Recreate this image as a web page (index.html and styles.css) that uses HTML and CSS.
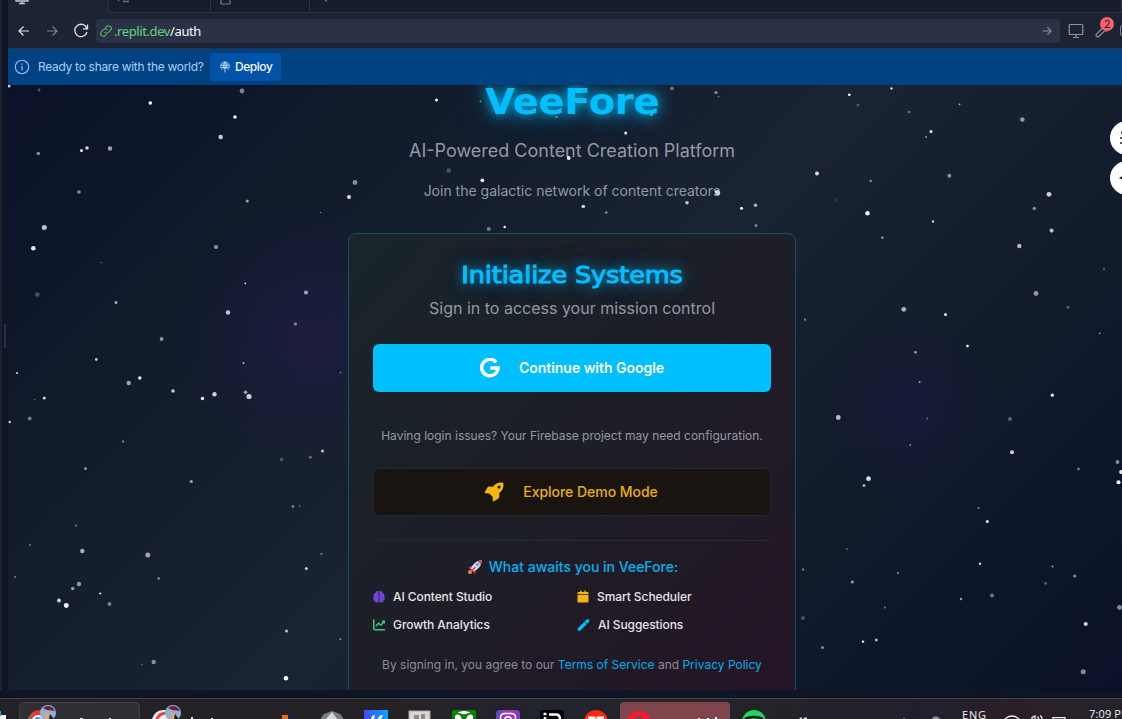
FILE: index.html
```
<!DOCTYPE html>
<html lang="en"><head><meta charset="utf-8"><title>VeeFore</title><link rel="stylesheet" href="styles.css"></head>
<body>
<div class="workspace">
  <div class="side"></div>
  <div class="gutter"><div class="handle"></div></div>
  <main class="pane">
    <div class="tabs">
      <div class="tab active"><svg width="14" height="6"><path d="M1 0v1h12V0M7 1v3M4 3.500h6" fill="none" stroke="#c5cad6" stroke-width="1.3"/></svg></div>
      <div class="tab t2"><svg width="14" height="4"><path d="M1 1l1-1M6 1.5h6" stroke="#77705f" stroke-width="1.3"/></svg></div>
      <div class="tab t3"><svg width="12" height="6"><path d="M1 0v3q0 1 1 1h7q1 0 1-1V0" fill="none" stroke="#777d8c" stroke-width="1.2"/></svg></div>
      <div class="tab t4"><svg width="12" height="4"><path d="M5 0v1.500" stroke="#8b91a0" stroke-width="1.3"/></svg></div>
    </div>
    <div class="toolbar">
      <svg class="nav" width="12" height="12" viewBox="0 0 12 12"><path d="M11 6H1.500M5.500 1.500L1 6l4.500 4.500" fill="none" stroke="#dfe3eb" stroke-width="1.2"/></svg>
      <svg class="nav dim" width="12" height="12" viewBox="0 0 12 12"><path d="M1 6h9.500M6.500 1.500L11 6l-4.500 4.500" fill="none" stroke="#7d8391" stroke-width="1.2"/></svg>
      <svg class="nav" width="16" height="16" viewBox="0 0 16 16"><path d="M13.800 5.300A6.200 6.200 0 1 0 14 9M14.500 1.500V5.800h-4.500" fill="none" stroke="#dfe3eb" stroke-width="1.3"/></svg>
      <div class="address">
        <svg width="12" height="12" viewBox="0 0 24 24"><path d="M9 14a5 5 0 0 0 8 .5l4-4a5 5 0 0 0-7.500-7.500L11 5.500M15 10a5 5 0 0 0-8-.5l-4 4a5 5 0 0 0 7.500 7.500L13 18.500" fill="none" stroke="#57ab6c" stroke-width="2.200"/></svg>
        <span class="url"><span class="host">.replit.dev</span>/auth</span>
        <svg class="go" width="10" height="10" viewBox="0 0 12 12"><path d="M1 6h9.500M6.500 1.500L11 6l-4.500 4.500" fill="none" stroke="#8a8f9d" stroke-width="1.3"/></svg>
      </div>
      <svg class="monitor" width="16" height="16" viewBox="0 0 16 16"><rect x="1.200" y="1.500" width="13.600" height="10" rx="1" fill="none" stroke="#9095a1" stroke-width="1.2"/><path d="M8 12v2.500M5 14.500h6" stroke="#9095a1" stroke-width="1.2"/></svg>
      <div class="tools"><svg width="16" height="16" viewBox="0 0 16 16"><path d="M8 5.500L2.500 11.200a1.600 1.600 0 0 0 2.300 2.300L10.300 8H13V6" fill="none" stroke="#9095a1" stroke-width="1.2"/></svg><span class="badge">2</span></div>
      <div class="edge"></div>
    </div>
    <div class="banner">
      <svg width="16" height="16" viewBox="0 0 16 16"><circle cx="8" cy="8" r="6.700" fill="none" stroke="#8cc4ff" stroke-width="1.1"/><path d="M8 7v4.200M8 4.600v1.200" stroke="#8cc4ff" stroke-width="1.2"/></svg>
      <span class="ready">Ready to share with the world?</span>
      <div class="deploy"><svg width="12" height="12" viewBox="0 0 12 12"><g fill="none" stroke="#dcebfb" stroke-width=".8"><path d="M3.200 8.500A4.300 4.300 0 1 1 8.800 8.500M4.300 6.500V3.500q1.700-4 3.400 0v3M2 4.200h8M2.800 6.500h6.400M6 1v10.500M4.500 8L6 6.500 7.500 8"/></g></svg><span>Deploy</span></div>
    </div>
    <section class="view">
      <svg class="stars" id="stars" width="1114" height="605" viewBox="8 85 1114 605"></svg>
      <h1 class="glow">VeeFore</h1>
      <p class="tagline">AI-Powered Content Creation Platform</p>
      <p class="join">Join the galactic network of content creators</p>
      <div class="card">
        <h2 class="glow">Initialize Systems</h2>
        <p class="signin">Sign in to access your mission control</p>
        <div class="btn google"><svg width="20" height="20" viewBox="0 0 20 20"><path d="M16.200 4.300A8.200 8.200 0 1 0 18.100 10H10.300" fill="none" stroke="#fff" stroke-width="3.500"/></svg><span>Continue with Google</span></div>
        <p class="issues">Having login issues? Your Firebase project may need configuration.</p>
        <div class="btn demo"><svg width="20" height="20" viewBox="0 0 20 20"><path fill="#f5b70c" fill-rule="evenodd" d="M19.300.8C15 .2 11.800 1 9 4.700L5.200 4.600Q4 4.700 3.300 5.800L.6 10.400Q.4 11.300 1.600 11.200L5.300 11.500 8.500 14.700 8.800 18.500Q9 19.800 10 19.300L14 16.800Q15.200 16 15.300 14.900V11.100C19 8.200 19.900 5 19.300.8zM15 3.400a1.500 1.500 0 1 1 0 3.100 1.500 1.500 0 0 1 0-3.100z"/></svg><span>Explore Demo Mode</span></div>
        <div class="rule"></div>
        <h3><svg width="16" height="16" viewBox="0 0 16 16"><path d="M4.500 6.500L1 9l3 1zM9.500 11.500l-2 3.500-1.500-3z" fill="#dd2e57"/><path d="M14.700 1.200C9.500 1.200 5.500 5.400 3.600 9.800l2.600 2.600C11 10.400 14.800 6.800 14.700 1.200z" fill="#dfe1ec"/><path d="M14.700 1.200q-2.500 0-4.200 1l3.200 3.200q1-2 1-4.200z" fill="#e33c5f"/><path d="M8.500 8L5 11.500" stroke="#dd2e57" stroke-width="1.500"/><circle cx="10.400" cy="5.600" r="1.700" fill="#539fdc"/><circle cx="3" cy="13" r="2" fill="#f28a36"/></svg><span>What awaits you in VeeFore:</span></h3>
        <div class="features">
          <div><svg width="12" height="14" viewBox="0 0 12 14"><path d="M5.600 1.300C4 .6 2.500 1.600 2.300 3 .9 3.600.3 5.200.7 6.400c-.9 1-.6 3 .5 3.800.2 1.800 2.600 3 4.400 1.900zM6.400 1.300C8 .6 9.500 1.600 9.700 3c1.400.6 2 2.200 1.600 3.400.9 1 .6 3-.5 3.800-.2 1.800-2.600 3-4.400 1.900z" fill="#7543dc"/></svg><span>AI Content Studio</span></div>
          <div><svg width="12" height="14" viewBox="0 0 12 14"><path fill="#f5b70c" d="M.5 4.200V3q0-1 1-1H3V.7h1.600V2h2.800V.7H9V2h1.500q1 0 1 1v1.200zM.5 5h11v6.500q0 1-1 1h-9q-1 0-1-1z"/></svg><span>Smart Scheduler</span></div>
          <div><svg width="12" height="14" viewBox="0 0 12 14"><path d="M.8 1.500v9.300q0 .9 1 .9H12M3 8l2.500-2.800L8 7l3.200-3.500M9 3.200h2.500v2.300" fill="none" stroke="#38ce72" stroke-width="1.500"/></svg><span>Growth Analytics</span></div>
          <div><svg width="13" height="14" viewBox="0 0 13 14"><path d="M2.200 11.200L10.800 2.800" stroke="#00bfff" stroke-width="3.300" stroke-linecap="round"/><path d="M7.700 3.800l2 2" stroke="#1d1e29" stroke-width=".7"/></svg><span>AI Suggestions</span></div>
        </div>
        <p class="terms">By signing in, you agree to our <a>Terms of Service</a> and <a>Privacy Policy</a></p>
      </div>
      <div class="float f1"><svg width="12" height="16"><path d="M2 2q1-2 6-2v4H2zM1 7h9v2H1zM1 12h9v2H1z" fill="#555"/></svg></div>
      <div class="float f2"><svg width="12" height="16"><path d="M0 8l5-3v5z" fill="#111"/></svg></div>
    </section>
  </main>
</div>
<footer class="taskbar">
<svg width="1122" height="20" viewBox="0 699 1122 20">
  <defs><linearGradient id="ig"><stop stop-color="#4e50c9"/><stop offset=".5" stop-color="#b532a5"/><stop offset="1" stop-color="#7d39cf"/></linearGradient><linearGradient id="bl"><stop stop-color="#3f4bff"/><stop offset="1" stop-color="#0aa5ff"/></linearGradient></defs>
  <path d="M0 711h1v4h5v4H0z" fill="#fff"/><path d="M0 711h1v5H0z" fill="#12a7e8"/>
  <rect x="19.500" y="702.500" width="120" height="30" rx="4" fill="#302f34" stroke="#403f44"/>
  <path d="M28 719q3-10 14-9l3 9z" fill="#e33b2e"/><path d="M28 719l1-3 2 3z" fill="#25a653"/><circle cx="38" cy="721" r="5" fill="#4b89ee" stroke="#fff" stroke-width="2"/>
  <circle cx="48" cy="713" r="8" fill="#86b3d8"/><path d="M43 708q5-4 10 0l2 3-8-1z" fill="#761d3c"/><path d="M44 719l2-7 5 2 1 5z" fill="#dda57b"/><path d="M50 714l4 5h-5z" fill="#1c1d2b"/>
  <path d="M152 719q3-10 14-9l3 9z" fill="#eee"/><path d="M157 719q2-6 10-6" fill="none" stroke="#e84235" stroke-width="3"/>
  <circle cx="173" cy="713" r="8" fill="#86b3d8"/><path d="M168 708q5-4 10 0l2 3-8-1z" fill="#761d3c"/><path d="M169 719l2-7 5 2 1 5z" fill="#dda57b"/><path d="M175 714l4 5h-5z" fill="#1c1d2b"/>
  <path d="M80 718h3v1h-3zM109 718h2v1h-2zM191 717h2v2h-2zM211 718h2v1h-2z" fill="#e5e5e5"/>
  <rect x="282" y="715" width="6" height="4" fill="#ef6910"/><rect x="288" y="715" width="8" height="4" fill="#19233b"/>
  <path d="M321 718l3-4 8-3 8 3 3 4v1h-22z" fill="#7a8087"/><path d="M326 719l6-7 5 7z" fill="#d4d7da"/>
  <rect x="364" y="710" width="24" height="12" fill="url(#bl)"/><path d="M371 719q1-4 4-4l-1 4zM378 719q1-4 5-4l-2 4z" fill="#fff"/>
  <rect x="409" y="711" width="21" height="10" fill="#d9d7cf" stroke="#aaa79f"/><path d="M414 715h5v4h-5zM421 714h4v5h-4z" fill="#8d8c88"/>
  <rect x="452" y="710" width="24" height="12" rx="2" fill="#127d13"/><path d="M457.500 712.500q6.500-3 13 0l-6.500 2zM455 716q4-4 7 3h-7zM473 716q-4-4-7 3h7z" fill="#fff"/>
  <rect x="496" y="710" width="24" height="16" rx="4" fill="url(#ig)"/><rect x="500.500" y="713.500" width="15" height="12" rx="4" fill="none" stroke="#fff" stroke-width="1.600"/><circle cx="508" cy="720" r="3.300" fill="none" stroke="#fff" stroke-width="1.600"/>
  <rect x="540" y="710" width="24" height="14" rx="3" fill="#000"/><path d="M543.500 714h3M545 717v2M549 714.500h7q4 0 4 5" fill="none" stroke="#fff" stroke-width="2.500"/>
  <circle cx="596" cy="722" r="12" fill="#ff2a14"/><rect x="588" y="716.500" width="7.500" height="5" rx="1" fill="#fff"/><rect x="596.500" y="716.500" width="7.500" height="5" rx="1" fill="#fff"/>
  <rect x="620" y="702" width="110" height="24" rx="4" fill="#80454c"/><path d="M628 719q2-8 11-8t11 8h-7q-1-4-4-4t-4 4z" fill="#f51b2d"/><path d="M698 718h2v1h-2zM707 718h2v1h-2zM715 717h2v2h-2z" fill="#fff"/>
  <circle cx="754" cy="722" r="12" fill="#1ed760"/><path d="M745 719q9-4 18 0" stroke="#111" stroke-width="2.500" fill="none"/>
  <path d="M800 719q0-1 2-1M804 719q0-1 3-1" stroke="#ddd" stroke-width="1.500"/><circle cx="936" cy="721" r="4.500" fill="#929196"/><path d="M903 718h2v1h-2z" fill="#777"/>
  <g fill="none" stroke="#eee" stroke-width="1.300"><path d="M1005 719q7-6 14 0M1032 719v-1.500l3-1.500v3M1037.500 716.500q1 1 1 2.500M1040 715.500q2 1 2 3.500M1053 719v-1.300h12v1.300"/></g>
  <text x="962" y="718.500" textLength="24" class="tray">ENG</text><text x="1089" y="718" class="tray" textLength="42">7:09 PM</text>
</svg>
</footer>
<script src="stars.js"></script>
</body></html>
```

FILE: styles.css
```
*{box-sizing:border-box}
body{margin:0;width:1122px;height:719px;overflow:hidden;background:#0e1525;font-family:Inter,sans-serif;display:flex;flex-direction:column}
h1,h2,h3,p{margin:0;font-weight:400;white-space:nowrap}
svg{display:block;flex:none}
.workspace{display:flex;height:698px;padding-bottom:8px}
.side{width:2px;background:#1c2231;flex:none}
.gutter{width:6px;flex:none;padding:324px 0 0 2px}
.handle{width:2px;height:24px;background:#2b3245}
.pane{width:1114px;flex:none;display:flex;flex-direction:column}
.tabs{height:13px;display:flex;background:#171d2d;flex:none}
.tab{width:100px;border-right:1px solid #2b3245;border-bottom:1px solid #2b3245;padding-left:7px}
.tab.active{background:#1c2333;border-bottom-color:#1c2333;width:101px}
.tab.t2{width:102px;padding-left:8px}.tab.t3{width:99px;padding-left:9px}.tab.t4{flex:1;padding-left:11px}
.toolbar{height:36px;background:#1c2333;border-bottom:1px solid #2b3245;display:flex;align-items:center;padding-left:10px;flex:none}
.nav{margin-right:16px;flex:none}.nav.dim{margin-right:15px}
.toolbar .nav:nth-child(3){margin-right:7px}
.address{width:964px;flex:none;height:24px;border-radius:4px;background:#2b3245;display:flex;align-items:center;padding:0 8px 0 4px;color:#f5f9fc}
.url{font:13px "Noto Sans",sans-serif;margin-left:2px;letter-spacing:-.4px;flex:1}
.host{color:#62d47e}
.monitor{margin-left:8px}
.tools{position:relative;margin-left:10px;flex:none}
.badge{position:absolute;left:6px;top:-6px;width:14px;height:14px;border-radius:50%;background:#ff5f66;color:#1c2333;font-size:11px;line-height:14px;text-align:center}
.edge{width:4px;flex:none;height:11px;border:1px solid #7c8290;border-radius:2px;margin-left:10px}
.banner{height:36px;background:#004182;display:flex;align-items:center;padding-left:6px;flex:none}
.ready{font:12px/18px Inter,sans-serif;color:#a3d0ff;margin-left:8px;width:172px;white-space:nowrap;letter-spacing:-.3px}
.deploy{width:71px;height:28px;border-radius:4px;background:#0053a6;color:#f5f9fc;display:flex;align-items:center;padding-left:9px;gap:4px;font:500 12px/18px Inter,sans-serif;letter-spacing:-.45px}
.view{height:605px;position:relative;overflow:hidden;display:flex;flex-direction:column;align-items:center;border-bottom-left-radius:4px;background:radial-gradient(circle at 299px 250px,rgba(45,25,85,.4),rgba(37,29,84,.32) 40px,rgba(35,24,75,.18) 85px,transparent 125px),radial-gradient(circle at 902px 324px,rgba(35,24,90,.34),rgba(35,22,70,.16) 50px,transparent 85px),linear-gradient(135deg,#0a1128 0%,#101a2b 20%,#1a2332 50%,#101a2b 76%,#0a1128 100%)}
.stars{position:absolute;left:0;top:0}
.view>h1,.view>p,.card{margin-left:14px}
.glow{color:#00bfff;font-family:"DejaVu Sans",sans-serif;text-shadow:0 0 10px #00a9e4,0 0 20px rgba(0,191,255,.55),0 0 40px rgba(0,191,255,.3)}
h1.glow{font-size:36px;font-weight:700;line-height:42px;height:40px;margin-top:-4px;letter-spacing:-.3px;transform:scaleX(1.07)}
.tagline{font-size:18px;line-height:28px;color:#9498a3;margin-top:16px;height:28px}
.join{font-size:14px;line-height:20px;color:#9498a3;margin-top:16px;height:20px}
.card{width:448px;height:480px;flex:none;margin-top:32px;border:1px solid #125362;border-radius:8px;padding:24px;background:linear-gradient(135deg,#18252a,#1e1e27 50%,#251426);position:relative;display:flex;flex-direction:column}
.card>*{flex:none}
h2.glow{font-size:23px;line-height:34px;height:32px;text-align:center;-webkit-text-stroke:1px #00bfff;letter-spacing:-.1px;transform:scaleX(1.11)}
.signin{font-size:16px;line-height:24px;margin-top:6px;text-align:center;color:#9498a3}
.btn{border-radius:6px;height:48px;display:flex;align-items:center;justify-content:center;font-weight:500;font-size:14px;letter-spacing:-.03px}
.btn span{margin-bottom:2px}
.google{background:#00bfff;color:#fff;font-weight:600;margin-top:24px;gap:19px}
.issues{font-size:12px;line-height:16px;text-align:center;color:#9498a3;margin-top:36px}
.demo{background:#1a1411;border:1px solid #1d2933;color:#eab008;margin-top:24px;gap:19px;padding-right:2px}
.rule{height:1px;background:#1f2b33;margin-top:24px}
h3{font-size:14px;line-height:20px;font-weight:500;color:#00b4f0;display:flex;gap:6px;align-items:center;justify-content:center;margin-top:16px;padding-left:1px}
.features{display:grid;grid-template-columns:204px 1fr;grid-template-rows:16px 16px;row-gap:12px;margin-top:12px;color:#e5e5e8;font-size:12px;font-weight:500;line-height:16px;letter-spacing:-.08px}
.features div{display:flex;align-items:center;gap:8px}
.terms{font-size:12px;line-height:16px;margin-top:24px;text-align:center;color:#8a8c99}
.terms a{color:#00aee8}
.float{position:absolute;width:34px;height:34px;border-radius:50%;background:#fff;left:1102px;display:flex;align-items:center;padding-left:9px}
.f1{top:36px}.f2{top:76px}
.taskbar{height:21px;border-top:1px solid #424146;background:linear-gradient(90deg,#222128,#252225 35%,#20242c 52%,#252328 66%,#20202d 82%,#2a1f27 91%,#25232a)}
.tray{font:11px "Open Sans",sans-serif;fill:#f0f0f0}
```

FILE: stars.js
```
// x, y, radius, opacity
const stars = [
[9,86,1.5,.8],[39,90,1.5,.3],[242,91,2.4,.45],[150.300,103,1.8,1],[235,117,1.8,.95],[220.700,137,2.2,.8],[38.300,153.500,1.8,.5],[81.500,150.500,1.5,.9],[87,148,1.8,.8],[110,148.500,2.2,.6],[79,192,1.8,.5],[247.300,201,1.5,.6],[320.500,212.500,.8,.5],[44.300,227.500,2.5,.75],[33.300,248.300,2.3,.9],[101.300,262.500,.9,.3],[216,247,2,.55],[245.300,283.300,.9,.9],[306,292.500,2.1,.6],[37.300,294.500,2.3,.25],[116,302.500,1.5,.65],[228,312.500,2.2,.75],[295.500,324,1.6,.5],[161.600,339,1.9,.55],[96.300,359.500,1.4,.75],[243.500,363,.9,.7],[340.500,372.500,.8,.5],[17,373,1.1,.8],[139.800,378,1.7,.95],[128.700,383,2.2,.6],
[173,391,1.700,.8],[214.500,394.300,2.200,.8],[202.500,398.500,1.7,1],[245.500,392.300,1.8,.6],[249,396.500,2.6,.8],[34.700,399.500,.8,.3],[44.300,398,1.6,.8],[29.700,418.500,2,.4],[9.700,422,1.2,.8],[123,441.500,1.2,.4],[85.500,468.700,1.4,.6],[191.300,481.500,1.6,.6],[281.500,459.500,1.8,.25],[310.300,457.300,1.5,.35],[322.500,451,1.5,.75],[293,506.500,1.3,.5],[299.500,506,.9,.3],[76,525.500,1.3,.3],[30,545,1.2,.3],[82.300,551,2.2,.65],[147.800,555,2.5,.6],[321.500,554,1.3,.3],[15,577,1.1,.4],[158.700,578.500,1.3,.5],[306.300,568.500,1.5,.8],[79,584,2.2,.55],[72.700,588.500,1.7,.55],[100.300,593.500,1.1,.9],[59,600.500,1.9,.8],[66.300,605.500,2.4,1],[109.500,604,1.9,.45],[286.500,631,1.6,.7],[340.300,639.300,1,.5],[153.700,662,2.2,.5],[141.700,664.500,.9,.3],[286,678.300,2.3,1],
[436.500,100,1.5,.95],[480.500,101.300,.9,.6],[672,88.500,1.8,.4],[716,92.500,1.6,.5],[718.500,96.500,.8,.5],[651.500,114.500,1.5,.6],[556.500,117,1,.6],[625.700,133,1.5,.9],[568.700,158,1.9,.9],[448.700,170.500,2.2,.25],[355,182.500,2.4,.5],[349,197,2,.85],[482.300,180.300,1.9,.9],[717.500,192.500,2.700,.7],[583.300,206.500,1.8,.8],[606.300,212.500,1.3,.5],[687,202.700,1.8,.75],[741.500,208.300,1.5,.95],[755.500,205.300,1.8,.65],[756,225.500,1.5,.45],[488.700,229,2.1,.4],[504.700,227,1.3,.9],
[849.300,94.800,1.3,1],[891.500,88.500,1.2,.8],[858,105,1.6,.25],[909,112,1.3,.4],[959.500,104.300,.9,.7],[1022.300,119.500,2.300,.55],[931,131.500,1.500,.9],[926,137,1.100,.5],[817,173.500,1.9,.9],[949.300,175.700,2,.5],[870.700,181,1.2,.5],[835.500,200,.8,.25],[867.500,213.300,2.2,.95],[1049,194.300,2.4,.8],[1034.300,208.500,1.8,.5],[933,221.500,1.2,.8],[1051.600,230.600,2.1,.7],[882.300,237.600,1.2,.6],[1019.300,246,2.2,.7],[1104,269,1.2,.25],[1036,293.500,2.4,.55],[903.800,309.300,2.4,.65],[945.500,314.500,1.5,.9],[805,319.700,1.1,.5],[1068,307.300,1.5,.3],[1099.700,333.300,.9,.6],[967.500,346,1.3,1],[915.500,352.300,1.3,.6],[919.600,382,1,.6],[1052.300,395.200,1.6,.95],[838.300,417.500,2.4,.7],[927.300,418.500,1,.4],[1010,419,1.9,.35],[910.300,445,1.1,.4],[1012,452.300,2,.8],[868.500,478.700,2.4,.85],[864,485.600,1.4,.7],[1078.500,469,1.4,.4],[1117.500,462,1.9,.5],[1121,472,1.9,.9],[1118.500,482.300,2,1],[978.500,508,1.1,.5],[987.300,521.500,1.5,.95],[847,549,1.1,.3],[803,569.500,1.2,.4],[898,573,1.2,.4],[852.300,582,1.5,.6],[980,563.700,1.3,.8],[1052.500,566.500,1,.6],[1045.500,583.300,1.5,.3],[1074.700,576,1.6,.5],[961,599,1.2,.6],[992,595.500,2,.4],[885,607.500,.9,.5],[803,618,2,.25],[1119.500,607.500,2.4,.5],[1085.700,624,2.1,.8],[876.300,640,1.5,.7],[863,641.600,1.2,.95],[822.500,647.600,1.5,.5],[1083.200,671.700,2.5,.5]
];
const field = document.getElementById('stars');
for (const [x, y, r, o] of stars) {
  const c = document.createElementNS('http://www.w3.org/2000/svg', 'circle');
  c.setAttribute('cx', x); c.setAttribute('cy', y);
  c.setAttribute('r', r); c.setAttribute('fill', '#fff'); c.setAttribute('opacity', o);
  field.appendChild(c);
}
```
